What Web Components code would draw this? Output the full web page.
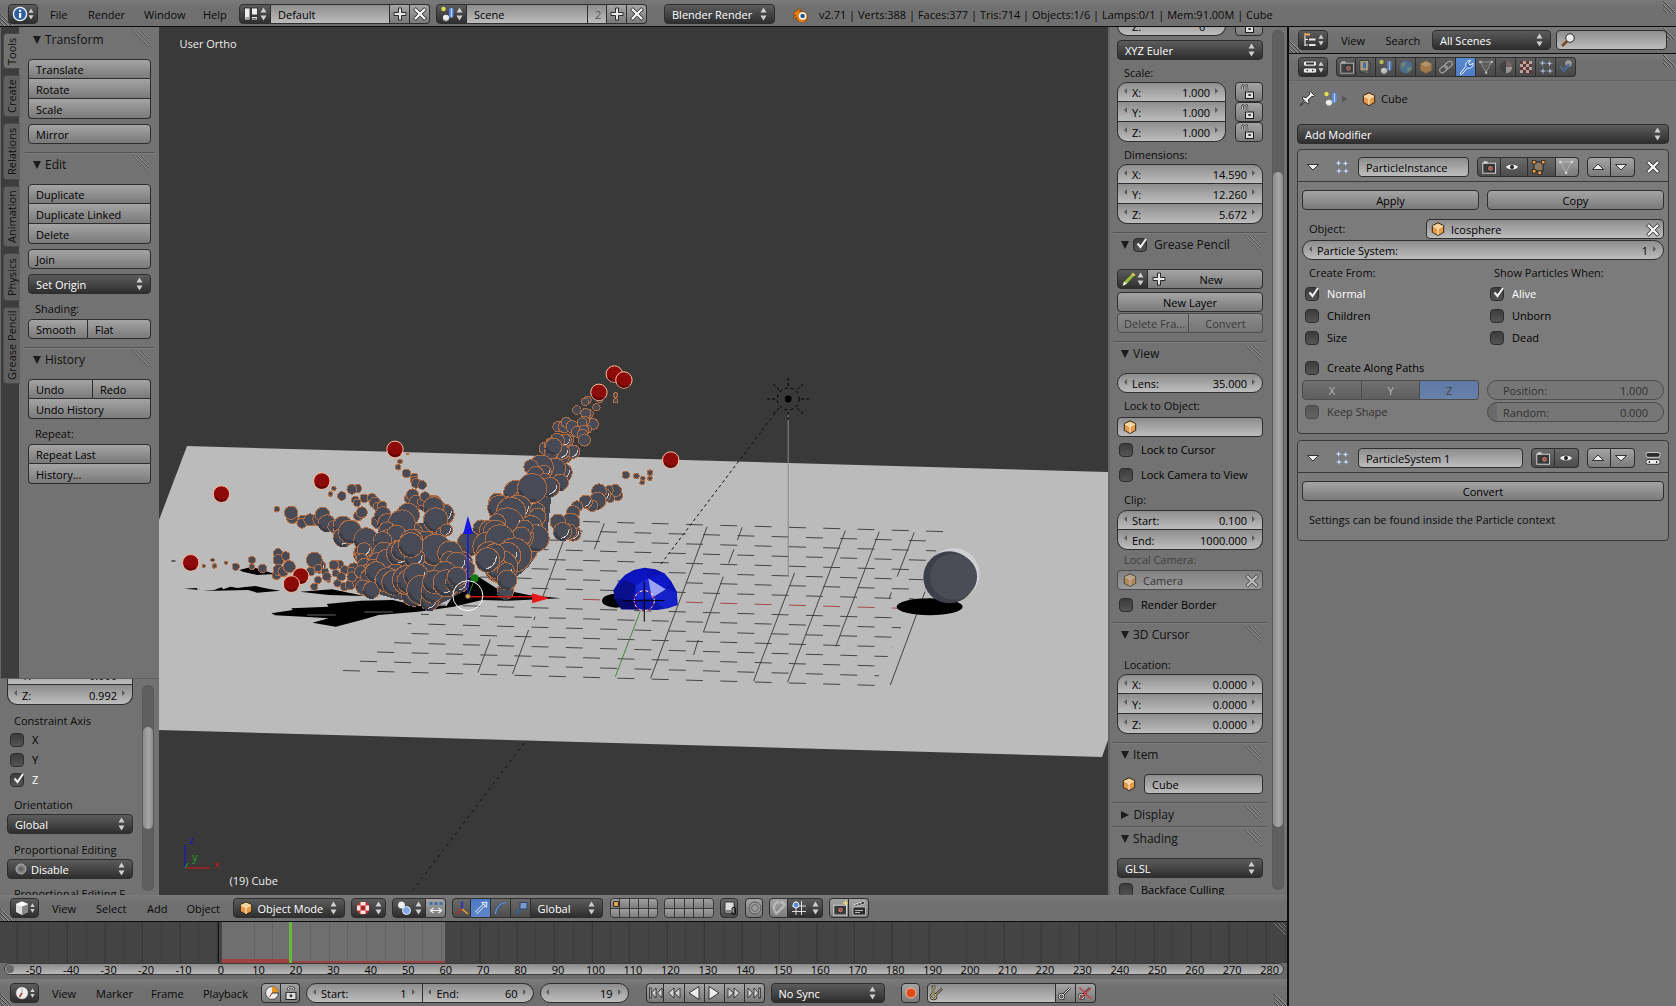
<!doctype html>
<html><head><meta charset="utf-8"><title>Blender</title>
<style>html,body{margin:0;padding:0;background:#393939;overflow:hidden}</style></head>
<body>
<b-screen>
  <b-head style="padding-top:1px">
    <b-hatch at="bl"></b-hatch><b-hatch at="tr"></b-hatch>
    <b-btn k="menu" ico style="width:30px;margin-left:8px"><b-ico slot="i" n="info"></b-ico></b-btn>
    <b-menu style="margin-left:12px;width:38px">File</b-menu><b-menu style="width:56px">Render</b-menu><b-menu style="width:59px">Window</b-menu><b-menu style="width:36px">Help</b-menu>
    <b-btn k="menu" ico j="l" style="width:32px"><b-ico slot="i" n="screen"></b-ico></b-btn><b-btn k="text" j="c" style="width:119px">Default</b-btn><b-btn j="c" ico style="width:20px"><b-ico slot="i" n="plus"></b-ico></b-btn><b-btn j="r" ico style="width:20px"><b-ico slot="i" n="x"></b-ico></b-btn>
    <b-btn k="menu" ico j="l" style="width:31px;margin-left:6px"><b-ico slot="i" n="scene"></b-ico></b-btn><b-btn k="text" j="c" style="width:121px">Scene</b-btn><b-btn k="text" j="c" center dis2 style="width:19px;color:#555">2</b-btn><b-btn j="c" ico style="width:20px"><b-ico slot="i" n="plus"></b-ico></b-btn><b-btn j="r" ico style="width:20px"><b-ico slot="i" n="x"></b-ico></b-btn>
    <b-btn k="menu" style="width:111px;margin-left:17px">Blender Render</b-btn>
    <b-ico n="logo" style="margin-left:18px"></b-ico>
    <b-menu style="margin-left:10px;white-space:nowrap">v2.71 | Verts:388 | Faces:377 | Tris:714 | Objects:1/6 | Lamps:0/1 | Mem:91.00M | Cube</b-menu>
  </b-head>
  <b-split>
    <b-left>
      <b-viewrow>
        <b-leftdock>
          <b-toolregion>
            <b-tabs>
              <b-tab on style="height:36px">Tools</b-tab><b-tab style="height:42px">Create</b-tab><b-tab style="height:57px">Relations</b-tab><b-tab style="height:61px">Animation</b-tab><b-tab style="height:48px">Physics</b-tab><b-tab style="height:77px">Grease Pencil</b-tab>
            </b-tabs>
            <b-shelf>
              <b-panel name="Transform" first>
                <b-col><b-btn j="t">Translate</b-btn><b-btn j="m">Rotate</b-btn><b-btn j="b">Scale</b-btn></b-col>
                <b-btn style="margin-top:5px">Mirror</b-btn>
              </b-panel>
              <b-panel name="Edit">
                <b-col><b-btn j="t">Duplicate</b-btn><b-btn j="m">Duplicate Linked</b-btn><b-btn j="b">Delete</b-btn></b-col>
                <b-btn style="margin-top:5px">Join</b-btn>
                <b-btn k="menu" style="margin-top:5px">Set Origin</b-btn>
                <b-label style="margin-top:8px;height:17px">Shading:</b-label>
                <b-row><b-btn j="l" style="width:60px">Smooth</b-btn><b-btn j="r" style="flex:1">Flat</b-btn></b-row>
              </b-panel>
              <b-panel name="History">
                <b-row><b-btn j="t l" style="width:65px">Undo</b-btn><b-btn j="t r" style="flex:1">Redo</b-btn></b-row>
                <b-btn j="b">Undo History</b-btn>
                <b-label style="margin-top:8px;height:17px">Repeat:</b-label>
                <b-col><b-btn j="t">Repeat Last</b-btn><b-btn j="b">History...</b-btn></b-col>
              </b-panel>
            </b-shelf>
          </b-toolregion>
          <b-opregion>
            <b-opbody>
              <b-col style="margin-top:-14px">
                <b-btn k="num" j="t">Y:<span slot="v">0.000</span></b-btn>
                <b-btn k="num" j="b">Z:<span slot="v">0.992</span></b-btn>
              </b-col>
              <b-label style="margin-top:9px;height:16px">Constraint Axis</b-label>
              <b-check style="margin-top:3px;margin-left:3px">X</b-check>
              <b-check style="margin-top:6px;margin-left:3px">Y</b-check>
              <b-check on style="margin-top:6px;margin-left:3px">Z</b-check>
              <b-label style="margin-top:11px;height:15px">Orientation</b-label>
              <b-btn k="menu" style="margin-top:1px">Global</b-btn>
              <b-label style="margin-top:9px;height:16px">Proportional Editing</b-label>
              <b-btn k="menu" style="margin-top:0;padding-left:5px" ><b-ico slot="i" n="disc" style="margin-right:2px"></b-ico>Disable</b-btn>
              <b-label style="margin-top:8px;height:16px">Proportional Editing F</b-label>
            </b-opbody>
            <b-scroll style="margin:6px 0 4px 9px" top="42" len="102"></b-scroll>
          </b-opregion>
        </b-leftdock>
        <b-view>
          <span class="t" slot="ortho">User Ortho</span>
          <span class="t" slot="name">(19) Cube</span>
        </b-view>
        <b-nregion>
          <b-nbody>
            <b-panel name="" bare n>
              <b-row style="margin-top:-12px"><b-btn k="num" j="b" style="width:109px">Z:<span slot="v">0°</span></b-btn><b-btn ico style="width:28px;margin-left:9px"><b-ico slot="i" n="lock"></b-ico></b-btn></b-row>
              <b-btn k="menu" style="margin-top:4px">XYZ Euler</b-btn>
              <b-label style="margin-top:6px;height:16px">Scale:</b-label>
              <b-row>
                <b-col style="width:109px;margin-top:0"><b-btn k="num" j="t">X:<span slot="v">1.000</span></b-btn><b-btn k="num" j="m">Y:<span slot="v">1.000</span></b-btn><b-btn k="num" j="b">Z:<span slot="v">1.000</span></b-btn></b-col>
                <b-col style="width:28px;margin-left:9px"><b-btn ico><b-ico slot="i" n="lock"></b-ico></b-btn><b-btn ico><b-ico slot="i" n="lock"></b-ico></b-btn><b-btn ico><b-ico slot="i" n="lock"></b-ico></b-btn></b-col>
              </b-row>
              <b-label style="margin-top:6px;height:16px">Dimensions:</b-label>
              <b-col><b-btn k="num" j="t">X:<span slot="v">14.590</span></b-btn><b-btn k="num" j="m">Y:<span slot="v">12.260</span></b-btn><b-btn k="num" j="b">Z:<span slot="v">5.672</span></b-btn></b-col>
            </b-panel>
            <b-panel name="Grease Pencil" n chk style="--hh:36px">
              <b-row><b-btn k="menu" ico j="l" style="width:31px"><b-ico slot="i" n="pencil"></b-ico></b-btn><b-btn j="r" style="flex:1;padding-left:3px" center><b-ico slot="i" n="plus"></b-ico>New</b-btn></b-row>
              <b-btn center style="margin-top:3px">New Layer</b-btn>
              <b-row style="margin-top:1px;opacity:.5"><b-btn j="l" style="width:72px;padding:0 0 0 6px">Delete Fra...</b-btn><b-btn j="r" center style="flex:1">Convert</b-btn></b-row>
            </b-panel>
            <b-panel name="View" n>
              <b-btn k="num">Lens:<span slot="v">35.000</span></b-btn>
              <b-label style="margin-top:6px;height:18px">Lock to Object:</b-label>
              <b-btn k="text" ico style="padding-left:4px"><b-ico slot="i" n="cube"></b-ico></b-btn>
              <b-check style="margin-top:6px;margin-left:2px">Lock to Cursor</b-check>
              <b-check style="margin-top:11px;margin-left:2px">Lock Camera to View</b-check>
              <b-label style="margin-top:11px;height:17px">Clip:</b-label>
              <b-col><b-btn k="num" j="t">Start:<span slot="v">0.100</span></b-btn><b-btn k="num" j="b">End:<span slot="v">1000.000</span></b-btn></b-col>
              <b-label style="margin-top:3px;height:17px;opacity:.5">Local Camera:</b-label>
              <b-btn k="text" style="padding-left:4px;opacity:.55;padding-right:2px"><b-ico slot="i" n="cube" style="margin-right:5px"></b-ico>Camera<b-ico slot="v" n="x"></b-ico></b-btn>
              <b-check style="margin:8px 0 2px 2px">Render Border</b-check>
            </b-panel>
            <b-panel name="3D Cursor" n>
              <b-label style="margin-top:4px;height:16px">Location:</b-label>
              <b-col><b-btn k="num" j="t">X:<span slot="v">0.0000</span></b-btn><b-btn k="num" j="m">Y:<span slot="v">0.0000</span></b-btn><b-btn k="num" j="b">Z:<span slot="v">0.0000</span></b-btn></b-col>
            </b-panel>
            <b-panel name="Item" n>
              <b-row><b-ico n="cube" style="margin:2px 7px 0 4px"></b-ico><b-btn k="text" style="flex:1">Cube</b-btn></b-row>
            </b-panel>
            <b-panel name="Display" n closed></b-panel>
            <b-panel name="Shading" n>
              <b-btn k="menu">GLSL</b-btn>
              <b-check style="margin-top:5px;margin-left:2px">Backface Culling</b-check>
            </b-panel>
          </b-nbody>
          <b-scroll style="margin:3px 0 5px 0" top="142" len="655"></b-scroll>
        </b-nregion>
      </b-viewrow>
      <b-head>
        <b-hatch at="bl"></b-hatch>
        <b-btn k="menu" ico style="width:29px;margin-left:10px"><b-ico slot="i" n="v3d"></b-ico></b-btn>
        <b-menu style="margin-left:13px;width:44px">View</b-menu><b-menu style="width:51px">Select</b-menu><b-menu style="width:39.5px">Add</b-menu><b-menu style="width:46px">Object</b-menu>
        <b-btn k="menu" ico2 style="width:112px;padding-left:4px"><b-ico slot="i" n="cube" style="margin-right:4px"></b-ico>Object Mode</b-btn>
        <b-btn k="menu" ico style="width:35px;margin-left:6px"><b-ico slot="i" n="shade"></b-ico></b-btn>
        <b-btn k="menu" ico j="l" style="width:34px;margin-left:6px"><b-ico slot="i" n="pivot"></b-ico></b-btn><b-btn j="r" ico style="width:20px"><b-ico slot="i" n="swap"></b-ico></b-btn>
        <b-btn ico k="dark" j="l" style="width:19px;margin-left:6px"><b-ico slot="i" n="axes"></b-ico></b-btn><b-btn ico k="blue" j="c" style="width:20px"><b-ico slot="i" n="arrow"></b-ico></b-btn><b-btn ico k="dark" j="c" style="width:20px"><b-ico slot="i" n="rot"></b-ico></b-btn><b-btn ico k="dark" j="c" style="width:20px"><b-ico slot="i" n="scl"></b-ico></b-btn><b-btn k="menu" j="r" style="width:72.5px">Global</b-btn>
        <b-layers dot style="width:48px;margin-left:7px"></b-layers><b-layers style="width:50px;margin-left:6px"></b-layers>
        <b-btn ico style="width:18px;margin-left:6px;--p:0" k="dark"><b-ico slot="i" n="lnk"></b-ico></b-btn>
        <b-btn ico style="width:18px;margin-left:7px;--p:0"><b-ico slot="i" n="ring"></b-ico></b-btn>
        <b-btn ico j="l" style="width:19px;margin-left:6px;--p:0"><b-ico slot="i" n="mag"></b-ico></b-btn><b-btn k="menu" ico j="r" style="width:35px"><b-ico slot="i" n="snap"></b-ico></b-btn>
        <b-btn ico j="l" style="width:20px;margin-left:6px;--p:0"><b-ico slot="i" n="rcam"></b-ico></b-btn><b-btn ico j="r" style="width:20px;--p:0"><b-ico slot="i" n="clap"></b-ico></b-btn>
      </b-head>
      <b-graph></b-graph>
      <b-ruler></b-ruler>
      <b-head noline>
        <b-hatch at="bl"></b-hatch><b-hatch at="br"></b-hatch>
        <b-btn k="menu" ico style="width:29px;margin-left:10px"><b-ico slot="i" n="clock"></b-ico></b-btn>
        <b-menu style="margin-left:13px;width:44px">View</b-menu><b-menu style="width:55px">Marker</b-menu><b-menu style="width:52px">Frame</b-menu><b-menu style="width:58px">Playback</b-menu>
        <b-btn ico j="l" style="width:20px;--p:0"><b-ico slot="i" n="prev"></b-ico></b-btn><b-btn ico j="r" style="width:19px;--p:0"><b-ico slot="i" n="lk"></b-ico></b-btn>
        <b-btn k="num" j="l" style="width:116.5px;margin-left:6px">Start:<span slot="v">1</span></b-btn><b-btn k="num" j="r" style="width:111px">End:<span slot="v">60</span></b-btn>
        <b-btn k="num" style="width:89px;margin-left:6px"><span slot="v">19</span></b-btn>
        <b-btn ico j="l" style="width:18.5px;margin-left:17px;--p:0"><b-ico slot="i" n="first"></b-ico></b-btn><b-btn ico j="c" style="width:20.5px;--p:0"><b-ico slot="i" n="pk"></b-ico></b-btn><b-btn ico j="c" style="width:20px;--p:0"><b-ico slot="i" n="rev"></b-ico></b-btn><b-btn ico j="c" style="width:20px;--p:0"><b-ico slot="i" n="play"></b-ico></b-btn><b-btn ico j="c" style="width:20px;--p:0"><b-ico slot="i" n="nk"></b-ico></b-btn><b-btn ico j="r" style="width:20px;--p:0"><b-ico slot="i" n="last"></b-ico></b-btn>
        <b-btn k="menu" style="width:114px;margin-left:6px">No Sync</b-btn>
        <b-btn ico style="width:19px;margin-left:16px;--p:0"><b-ico slot="i" n="rec"></b-ico></b-btn>
        <b-btn k="text" ico j="l" style="width:129px;margin-left:7px;padding-left:1px"><b-ico slot="i" n="key"></b-ico></b-btn><b-btn ico j="c" style="width:20px;--p:0"><b-ico slot="i" n="keyadd"></b-ico></b-btn><b-btn ico j="r" style="width:20px;--p:0"><b-ico slot="i" n="keydel"></b-ico></b-btn>
      </b-head>
    </b-left>
    <b-right>
      <b-head>
        <b-hatch at="tr"></b-hatch><b-hatch at="bl"></b-hatch>
        <b-btn k="menu" ico style="width:30px;margin-left:9px"><b-ico slot="i" n="outl"></b-ico></b-btn>
        <b-menu style="margin-left:13px;width:44.5px">View</b-menu><b-menu style="width:46.5px">Search</b-menu>
        <b-btn k="menu" style="width:119px">All Scenes</b-btn>
        <b-btn k="text" ico style="width:111px;margin-left:5px;padding-left:3px"><b-ico slot="i" n="zoom"></b-ico></b-btn>
      </b-head>
      <b-head noline style="box-shadow:0 1px #666">
        <b-hatch at="tr"></b-hatch>
        <b-btn k="menu" ico style="width:30px;margin-left:9px"><b-ico slot="i" n="prop"></b-ico></b-btn>
        <b-btn k="tab" ico j="l" style="margin-left:8px"><b-ico slot="i" n="cam"></b-ico></b-btn><b-btn k="tab" ico j="c"><b-ico slot="i" n="layers"></b-ico></b-btn><b-btn k="tab" ico j="c"><b-ico slot="i" n="scene"></b-ico></b-btn><b-btn k="tab" ico j="c"><b-ico slot="i" n="world"></b-ico></b-btn><b-btn k="tab" ico j="c"><b-ico slot="i" n="obj"></b-ico></b-btn><b-btn k="tab" ico j="c"><b-ico slot="i" n="link"></b-ico></b-btn><b-btn k="tab" on ico j="c"><b-ico slot="i" n="wrench"></b-ico></b-btn><b-btn k="tab" ico j="c"><b-ico slot="i" n="data"></b-ico></b-btn><b-btn k="tab" ico j="c"><b-ico slot="i" n="mat"></b-ico></b-btn><b-btn k="tab" ico j="c"><b-ico slot="i" n="tex"></b-ico></b-btn><b-btn k="tab" ico j="c"><b-ico slot="i" n="stars"></b-ico></b-btn><b-btn k="tab" ico j="r"><b-ico slot="i" n="phys"></b-ico></b-btn>
      </b-head>
      <b-props>
        <b-row style="height:38px;align-items:center;margin-top:0">
          <b-ico n="pin" style="margin-left:2px"></b-ico><b-ico n="scene" style="margin-left:8px"></b-ico><b-ico n="triR" style="margin-left:-2px"></b-ico><b-ico n="cube" style="margin-left:8px"></b-ico><b-label style="padding-left:4px;line-height:38px;height:38px">Cube</b-label>
        </b-row>
        <b-btn k="menu" style="margin-top:6px;">Add Modifier</b-btn>
        <b-box style="margin-top:5px">
          <b-ico slot="head" n="down" style="margin-left:7px"></b-ico><b-ico slot="head" n="stars" style="margin-left:13px"></b-ico>
          <b-btn slot="head" k="text" style="width:111px;margin-left:8px">ParticleInstance</b-btn>
          <b-btn slot="head" k="dark" ico j="l" style="width:24px;margin-left:8px"><b-ico slot="i" n="cam"></b-ico></b-btn><b-btn slot="head" k="dark" ico j="c" style="width:27px"><b-ico slot="i" n="eye"></b-ico></b-btn><b-btn slot="head" k="dark" ico j="c" style="width:28px"><b-ico slot="i" n="edit"></b-ico></b-btn><b-btn slot="head" ico j="r" style="width:23px;--p:0"><b-ico slot="i" n="data"></b-ico></b-btn>
          <b-btn slot="head" ico j="l" style="width:24px;margin-left:8px;--p:0"><b-ico slot="i" n="up"></b-ico></b-btn><b-btn slot="head" ico j="r" style="width:24px;--p:0"><b-ico slot="i" n="down"></b-ico></b-btn>
          <b-ico slot="head" n="x" style="margin-left:10px"></b-ico>
          <b-grid style="margin-top:8px"><b-btn center>Apply</b-btn><b-btn center>Copy</b-btn></b-grid>
          <b-row style="margin-top:9px"><b-label style="width:124px;line-height:19px">Object:</b-label><b-btn k="text" style="flex:1;padding-left:3px;padding-right:2px"><b-ico slot="i" n="cube" style="margin-right:5px"></b-ico>Icosphere<b-ico slot="v" n="x"></b-ico></b-btn></b-row>
          <b-btn k="num" style="margin-top:1px">Particle System:<span slot="v">1</span></b-btn>
          <b-grid style="margin-top:6px">
            <b-col><b-label style="height:14px">Create From:</b-label><b-check on style="margin:7px 0 0 3px">Normal</b-check><b-check style="margin:8px 0 0 3px">Children</b-check><b-check style="margin:8px 0 0 3px">Size</b-check></b-col>
            <b-col><b-label style="height:14px">Show Particles When:</b-label><b-check on style="margin:7px 0 0 3px">Alive</b-check><b-check style="margin:8px 0 0 3px">Unborn</b-check><b-check style="margin:8px 0 0 3px">Dead</b-check></b-col>
          </b-grid>
          <b-check style="margin:16px 0 0 3px">Create Along Paths</b-check>
          <b-grid style="margin-top:5px;opacity:.6">
            <b-col>
              <b-row><b-btn k="dark" center j="l" style="flex:1">X</b-btn><b-btn k="dark" center j="c" style="flex:1">Y</b-btn><b-btn k="blue" center j="r" style="flex:1">Z</b-btn></b-row>
              <b-check style="margin:5px 0 0 3px">Keep Shape</b-check>
            </b-col>
            <b-col>
              <b-btn k="plain">Position:<span slot="v">1.000</span></b-btn>
              <b-btn k="plain" style="margin-top:2px;background:linear-gradient(90deg,#5f5f5f 9px,#737373 9px)">Random:<span slot="v">0.000</span></b-btn>
            </b-col>
          </b-grid>
        </b-box>
        <b-box style="margin-top:6px">
          <b-ico slot="head" n="down" style="margin-left:7px"></b-ico><b-ico slot="head" n="stars" style="margin-left:13px"></b-ico>
          <b-btn slot="head" k="text" style="width:165px;margin-left:8px">ParticleSystem 1</b-btn>
          <b-btn slot="head" k="dark" ico j="l" style="width:24px;margin-left:8px"><b-ico slot="i" n="cam"></b-ico></b-btn><b-btn slot="head" k="dark" ico j="r" style="width:24px"><b-ico slot="i" n="eye"></b-ico></b-btn>
          <b-btn slot="head" ico j="l" style="width:24px;margin-left:8px;--p:0"><b-ico slot="i" n="up"></b-ico></b-btn><b-btn slot="head" ico j="r" style="width:24px;--p:0"><b-ico slot="i" n="down"></b-ico></b-btn>
          <b-ico slot="head" n="tog" style="margin-left:10px"></b-ico>
          <b-btn center style="margin-top:8px">Convert</b-btn>
          <b-label style="margin-top:12px;height:16px">Settings can be found inside the Particle context</b-label>
        </b-box>
      </b-props>
    </b-right>
  </b-split>
</b-screen>
<script>
const star=(x,y,r)=>`M${x} ${y-r}L${x+.7} ${y-.7}L${x+r} ${y}L${x+.7} ${y+.7}L${x} ${y+r}L${x-.7} ${y+.7}L${x-r} ${y}L${x-.7} ${y-.7}Z`;
const I={
info:`<circle cx="8" cy="8" r="6.6" fill="#2f5f9f" stroke="#e8eef8" stroke-width="1.4"/><rect x="7" y="7" width="2.2" height="5" fill="#fff"/><rect x="7" y="3.8" width="2.2" height="2" fill="#fff"/>`,
screen:`<rect x="1.5" y="2" width="5.5" height="12" fill="#eee" stroke="#222" stroke-width=".8"/><rect x="8.5" y="2" width="6" height="7" fill="#eee" stroke="#222" stroke-width=".8"/><rect x="8.5" y="10.5" width="6" height="3.5" fill="#eee" stroke="#222" stroke-width=".8"/><path d="M2.5 12h3.5M9.5 12.5h4" stroke="#555"/>`,
scene:`<circle cx="3.5" cy="3" r="2.2" fill="#dede50"/><rect x="9" y="2" width="4.6" height="9.5" rx="1.6" fill="#5c8ce0"/><path d="M11.5 2.3v9" stroke="#bcd4ff"/><circle cx="6" cy="12" r="3.2" fill="#e6e6e6"/><circle cx="5.2" cy="11.2" r="1" fill="#fff"/><path d="M3 13a3.2 3.2 0 0 0 6 0" stroke="#777" fill="none"/>`,
plus:`<path d="M6.5 2h3v4.5H14v3H9.5V14h-3V9.5H2v-3h4.5z" fill="#e8e8e8" stroke="#1a1a1a" stroke-width=".9"/>`,
x:`<path d="M3.8 1.6 8 5.8l4.2-4.2 2.2 2.2L10.2 8l4.2 4.2-2.2 2.2L8 10.2l-4.2 4.2-2.2-2.2L5.8 8 1.6 3.8z" fill="#eee" stroke="#1a1a1a" stroke-width=".9"/>`,
logo:`<path d="M.5 7 7 2.2l1.2 1.6L6 5.4h3.6a5.6 5.6 0 1 1-6.2 5.8L1 13l-.6-1.6 2.6-2.2H.8z" fill="#e87d0d" stroke="#5a2c00" stroke-width=".5"/><circle cx="9.6" cy="10" r="3.8" fill="#fff"/><circle cx="9.6" cy="10" r="2.3" fill="#265787"/>`,
cube:`<path d="M8 1.3 14.2 4.6v7L8 14.9l-6.2-3.3v-7z" fill="#2e2412"/><path d="M8 2.4 13.2 5v6.2L8 13.9l-5.2-2.7V5z" fill="#e59b4a"/><path d="M2.8 5 8 2.4 13.2 5 8 7.8z" fill="#f6d39e"/><path d="M8 7.8v6.1" stroke="#fff2d8"/><path d="M2.8 5 8 7.8 13.2 5" stroke="#fff2d8" fill="none" stroke-width=".7"/>`,
lock:`<rect x="6.5" y="8" width="8" height="6.5" fill="#ddd" stroke="#1c1c1c"/><rect x="9.4" y="10" width="2.4" height="2" fill="#333"/><path d="M8 8V2.8a2 2 0 0 0-4.4 0V5" fill="none" stroke="#1c1c1c" stroke-width="2.2"/><path d="M8 8V2.8a2 2 0 0 0-4.4 0V5" fill="none" stroke="#ddd" stroke-width="1"/>`,
pencil:`<path d="M1.5 15 3 10.5 11.5 1.5 14.5 4 6 12.8z" fill="#9cc04a" stroke="#26350a" stroke-width=".8"/><path d="M10.3 2.8l3 2.4 1.3-1.3-3-2.4z" fill="#e9c06a"/><path d="M1.5 15 3 10.5l3 2.3z" fill="#eee"/>`,
outl:`<path d="M2 1.5h6v2H2z" fill="#f2b060"/><path d="M3 4v10M3 7.5h3M3 13h3" stroke="#e8e8e8" stroke-width="1.2" fill="none"/><rect x="7" y="6.5" width="6.5" height="2" fill="#e8e8e8"/><rect x="7" y="12" width="6.5" height="2" fill="#e8e8e8"/>`,
prop:`<rect x="1.5" y="2" width="13" height="5.2" rx="1.6" fill="#e8e8e8" stroke="#222" stroke-width=".7"/><rect x="1.5" y="9" width="13" height="5" rx="1.6" fill="#e8e8e8" stroke="#222" stroke-width=".7"/><path d="M4 4.5h8" stroke="#333" stroke-width="2"/><path d="M4 11.5l2-1v2zM12 11.5l-2-1v2z" fill="#222"/>`,
cam:`<rect x="1.8" y="4.2" width="12.8" height="10" fill="#3a3a3a" stroke="#ddd" stroke-width=".9"/><rect x="2.5" y="2.4" width="4" height="2" fill="#ddd"/><circle cx="9.5" cy="9.3" r="3.1" fill="#9a8078" stroke="#222"/><circle cx="9.8" cy="9.2" r="1.3" fill="#d03a3a"/>`,
layers:`<rect x="3" y="3.5" width="9" height="10.5" fill="#8a8a8a" stroke="#333" transform="rotate(8 8 8)"/><rect x="1.8" y="1.5" width="9" height="10.5" fill="#c9b98f" stroke="#333"/><rect x="5" y="3.2" width="3" height="6" fill="#4a77c4"/>`,
world:`<circle cx="8" cy="8" r="6.5" fill="#4b79a6"/><path d="M3 5l3-2 2 2-2 2-1 3zM9 9l4-1 0 3-3 2z" fill="#7f9a7a"/>`,
obj:`<path d="M8 1.3 14.2 4.6v7L8 14.9l-6.2-3.3v-7z" fill="#8a6a3c"/><path d="M8 2.4 13.2 5v6.2L8 13.9l-5.2-2.7V5z" fill="#c28a4e"/><path d="M2.8 5 8 2.4 13.2 5 8 7.8z" fill="#d8b078"/>`,
link:`<g fill="none" stroke="#b8b8b8" stroke-width="1.3" transform="rotate(-40 8 8)"><rect x=".5" y="5.5" width="8.5" height="5" rx="2.5"/><rect x="7" y="5.5" width="8.5" height="5" rx="2.5"/></g>`,
wrench:`<path d="M2 14.5 8 7.3C7 4.5 9 1.5 12.5 1.5l-2 2.8 1.5 1.8 3-1.8c.4 3.4-2.6 5.6-5.6 4.6L3.6 15.5z" fill="#3c70c8" stroke="#fff" stroke-width="1"/>`,
data:`<path d="M2.5 3h11L8 13.5z" fill="none" stroke="#b8b8b8" stroke-width=".9"/><path d="M2.5 3 8 7.5 13.5 3M8 7.5v6" stroke="#999" fill="none" stroke-width=".6"/><g fill="#ddd"><rect x="1.2" y="1.8" width="2.2" height="2.2"/><rect x="12.6" y="1.8" width="2.2" height="2.2"/><rect x="7" y="12.6" width="2.2" height="2.2"/></g>`,
mat:`<circle cx="8" cy="8" r="6.2" fill="#7c6a64"/><path d="M8 1.8a6.2 6.2 0 0 0-6.2 6.2A6.2 6.2 0 0 0 8 14.2z" fill="#3c3c3c"/><path d="M8 8h6.2A6.2 6.2 0 0 1 8 14.2z" fill="#b8b0ac"/>`,
tex:`<rect x="2" y="2" width="12" height="12" fill="#d8c8c0"/><g fill="#6a2a2a"><rect x="2" y="2" width="3" height="3"/><rect x="8" y="2" width="3" height="3"/><rect x="5" y="5" width="3" height="3"/><rect x="11" y="5" width="3" height="3"/><rect x="2" y="8" width="3" height="3"/><rect x="8" y="8" width="3" height="3"/><rect x="5" y="11" width="3" height="3"/><rect x="11" y="11" width="3" height="3"/></g>`,
stars:`<path d="${star(4.5,4,3.6)}${star(11.5,4.5,3.3)}${star(5,12,3.6)}${star(12,12,3.3)}" fill="#f2f5ff" stroke="#5d78b0" stroke-width=".35"/>`,
phys:`<circle cx="10.5" cy="4.5" r="3.2" fill="#b8b8b8"/><path d="M2 7l4 5 5-7" fill="none" stroke="#4a6ea8" stroke-width="2.4"/>`,
pin:`<path d="M1 15 5.5 9.4 3 7l1.2-1.2 2.8 1L10.8 3l-.6-1.3L11.5.6l4 3.9-1.2 1.2-1.3-.5L9.2 9l1 3-1.2 1.2-2.5-2.7z" fill="#f2f2f2" stroke="#1c1c1c" stroke-width=".9"/>`,
zoom:`<circle cx="10" cy="6" r="4.3" fill="#c9c9c9" stroke="#333" stroke-width="1"/><circle cx="10" cy="6" r="3.2" fill="#e9e9e9"/><path d="M7 9.2 2 14" stroke="#7a4a20" stroke-width="2.6"/>`,
triR:`<path d="M5 4.5 10 8 5 11.5z" fill="#555"/>`,
down:`<path d="M2.5 5.5h11L8 11z" fill="#eee" stroke="#222" stroke-width=".9"/>`,
up:`<path d="M2.5 10.5h11L8 5z" fill="#eee" stroke="#222" stroke-width=".9"/>`,
eye:`<path d="M1.5 8C4 4.2 12 4.2 14.5 8 12 11.8 4 11.8 1.5 8z" fill="#f0f0f0" stroke="#333" stroke-width=".6"/><circle cx="8" cy="8" r="2" fill="#222"/>`,
edit:`<path d="M3 3h9v9H3z" fill="#8a7a66" stroke="#222"/><g fill="#f0a040" stroke="#222" stroke-width=".7"><rect x="1.5" y="1.5" width="3.4" height="3.4"/><rect x="10.6" y="1.5" width="3.4" height="3.4"/><rect x="1.5" y="10.6" width="3.4" height="3.4"/><rect x="7" y="12" width="3.4" height="3.4"/></g>`,
tog:`<rect x="1" y="2.5" width="14" height="4.8" rx="2" fill="#2d2d2d" stroke="#eee" stroke-width=".8"/><rect x="1" y="9.5" width="14" height="4.8" rx="2" fill="#eee" stroke="#222" stroke-width=".8"/><path d="M3 12l2-1.3v2.6zM13 12l-2-1.3v2.6z" fill="#222"/>`,
v3d:`<path d="M8 1.5 14 4v8l-6 3-6-3V4z" fill="#ddd"/><path d="M8 6.5V15l6-3V4z" fill="#888"/><path d="M2 4l6 2.5L14 4 8 1.5z" fill="#fff"/>`,
clock:`<circle cx="8" cy="8" r="6.4" fill="#eee" stroke="#333" stroke-width=".8"/><path d="M8 8 5.5 12" stroke="#b03030" stroke-width="1.5"/><path d="M8 8V3" stroke="#aaa"/>`,
shade:`<circle cx="8" cy="8" r="6.6" fill="#c63030"/><g fill="#f0e4e4"><rect x="2" y="5.5" width="3.5" height="5"/><rect x="10.5" y="5.5" width="3.5" height="5"/><rect x="5.5" y="2" width="5" height="3.5"/><rect x="5.5" y="10.5" width="5" height="3.5"/></g><circle cx="8" cy="8" r="2" fill="#a02828"/>`,
pivot:`<circle cx="5.5" cy="5" r="4" fill="#eee" stroke="#222" stroke-width=".7"/><circle cx="10.5" cy="10.5" r="4" fill="#7ea8e8" stroke="#eee" stroke-width="1"/>`,
swap:`<g fill="#3f6fae"><rect x="1.5" y="2" width="3" height="3"/><rect x="6.5" y="2" width="3" height="3"/><rect x="11.5" y="2" width="3" height="3"/></g><path d="M3 10.5h10M5.5 8 2.5 10.5 5.5 13M10.5 8l3 2.5-3 2.5" stroke="#eee" stroke-width="1.2" fill="none"/>`,
axes:`<path d="M8 9V1.5" stroke="#2828d0" stroke-width="1.6"/><path d="M8 9 2 14" stroke="#c82828" stroke-width="1.6"/><path d="M8 9l6 5" stroke="#e8a030" stroke-width="1.6"/>`,
arrow:`<path d="M3 13 12 4" stroke="#fff" stroke-width="3"/><path d="M3 13 12 4" stroke="#4a77c0" stroke-width="1.6"/><path d="M8.5 2.5 14 2l-.5 5.5z" fill="#7ba4e0" stroke="#fff" stroke-width=".8"/>`,
rot:`<path d="M2.5 14C3 8 6 3.5 13 2.5" fill="none" stroke="#3a5e92" stroke-width="2.6"/><path d="M2.5 14C3 8 6 3.5 13 2.5" fill="none" stroke="#7a9ac8" stroke-width="1"/>`,
scl:`<path d="M3 14 8 8" stroke="#3a5e92" stroke-width="2.6"/><rect x="7" y="2.5" width="7" height="6.5" fill="#7a9ac8" stroke="#2b4468"/>`,
lnk:`<rect x="3" y="2" width="9" height="11" fill="#ddd" stroke="#222" stroke-width=".8"/><path d="M4 11h5" stroke="#222"/><rect x="10" y="7.5" width="3.5" height="7" rx="1.6" fill="none" stroke="#111" stroke-width="1.1"/>`,
ring:`<circle cx="8" cy="8" r="6" fill="#9a9a9a" stroke="#5a5a5a"/><circle cx="8" cy="8" r="3.4" fill="none" stroke="#666"/>`,
mag:`<path d="M3 10V7a5 5 0 0 1 5-5M6 13 12.5 6.5a2.3 2.3 0 0 0-3.3-3.3" fill="none" stroke="#b8b8b8" stroke-width="2.4"/><path d="M3.5 10.5c.6 2 1.5 3 3 3.5" stroke="#b8b8b8" stroke-width="2.4" fill="none"/>`,
snap:`<path d="M5 1v14M10.5 1v14M1 6h14M1 11.5h14" stroke="#eee" stroke-width=".9"/><circle cx="5" cy="5" r="3" fill="#5c8ce0" stroke="#eee"/>`,
rcam:`<rect x="1.8" y="5.2" width="12.8" height="9.8" fill="#3a3a3a" stroke="#ddd" stroke-width=".9"/><circle cx="8.5" cy="10" r="3" fill="#9a8078" stroke="#222"/><circle cx="8.8" cy="10" r="1.2" fill="#d03a3a"/><path d="M13.5 .5v5M11 3h5" stroke="#ffe070" stroke-width="1.2"/>`,
clap:`<rect x="2" y="7" width="12.5" height="8" fill="#2a2a2a" stroke="#ddd" stroke-width=".7"/><path d="M1.5 5.5 13 1.2l.8 2.6-11.4 3z" fill="#2a2a2a" stroke="#ddd" stroke-width=".7"/><path d="M4 5.8 3 3.8M7 4.8 6 3M10 3.8 9 2" stroke="#eee" stroke-width="1"/><path d="M4 10.5h8M4 12.5h5" stroke="#bbb"/>`,
prev:`<circle cx="8" cy="8" r="6.4" fill="#eee" stroke="#333" stroke-width=".8"/><path d="M8 8V1.6a6.4 6.4 0 0 1 6.4 6.4z" fill="#e8901c"/><path d="M8 8 5.5 12" stroke="#b03030"/><path d="M8 8h6.4" stroke="#333"/>`,
lk:`<rect x="3" y="7.5" width="10" height="7" fill="#ddd" stroke="#222"/><rect x="6.8" y="9.5" width="2.4" height="2.6" fill="#333"/><path d="M5 7.5V5a3 3 0 0 1 6 0v2.5" fill="none" stroke="#222" stroke-width="2.1"/><path d="M5 7.5V5a3 3 0 0 1 6 0v2.5" fill="none" stroke="#ddd" stroke-width="1"/>`,
first:`<g fill="#d5d5d5" stroke="#222" stroke-width=".8"><path d="M8 3v10L3.5 8zM14 3v10L9.5 8z"/><rect x="1.5" y="3" width="1.6" height="10"/></g>`,
pk:`<g fill="#d5d5d5" stroke="#222" stroke-width=".8"><path d="M8 3v10L2.5 8zM14 3v10L8.5 8z"/></g>`,
rev:`<path d="M13 1.5v13L3 8z" fill="#ececec" stroke="#222" stroke-width=".9"/>`,
play:`<path d="M3 1.5v13L13 8z" fill="#ececec" stroke="#222" stroke-width=".9"/>`,
nk:`<g fill="#d5d5d5" stroke="#222" stroke-width=".8"><path d="M2 3v10l5.5-5zM8 3v10l5.5-5z"/></g>`,
last:`<g fill="#d5d5d5" stroke="#222" stroke-width=".8"><path d="M2 3v10l4.5-5zM8 3v10l4.5-5z"/><rect x="12.9" y="3" width="1.6" height="10"/></g>`,
rec:`<circle cx="8" cy="8" r="5" fill="#e04a18" stroke="#ffbe9a" stroke-width="1"/>`,
key:`<g fill="none" stroke="#222" stroke-width="2.4"><circle cx="4.5" cy="11.5" r="2.6"/><path d="M6.5 10 13 3.5M4 9V2h3"/></g><g fill="none" stroke="#ecd98a" stroke-width="1"><circle cx="4.5" cy="11.5" r="2.6"/><path d="M6.5 10 13 3.5M4 9V2h3"/></g>`,
keyadd:`<g fill="none" stroke="#222" stroke-width="2.2"><circle cx="4.5" cy="11.5" r="2.4"/><path d="M6.5 9.5 13 3"/></g><g fill="none" stroke="#eee" stroke-width="1"><circle cx="4.5" cy="11.5" r="2.4"/><path d="M6.5 9.5 13 3"/></g>`,
keydel:`<g fill="none" stroke="#222" stroke-width="2.2"><circle cx="4.5" cy="11.5" r="2.4"/><path d="M6.5 9.5 13 3"/></g><g fill="none" stroke="#eee" stroke-width="1"><circle cx="4.5" cy="11.5" r="2.4"/><path d="M6.5 9.5 13 3"/></g><path d="M2.5 2.5 14 14M13.5 3 3 14" stroke="#c83c3c" stroke-width="1.4"/>`,
disc:`<circle cx="8" cy="8" r="5" fill="#888" stroke="#aaa"/><circle cx="8" cy="8" r="2.6" fill="#666"/>`
};
function def(name,css,html,setup){
  customElements.define(name,class extends HTMLElement{
    constructor(){super();this.attachShadow({mode:'open'}).innerHTML=`<style>${css}</style>${html}`;}
    connectedCallback(){if(setup)setup(this,this.shadowRoot);}
  });
}
const FF='"Open Sans","Noto Sans",sans-serif';
def('b-screen',`:host{display:flex;flex-direction:column;width:1676px;height:1006px;overflow:hidden;background:#393939;font:11px/14px ${FF};color:#000;position:relative}`,'<slot></slot>');
def('b-head',`:host{display:flex;align-items:center;flex:none;box-sizing:border-box;height:27px;position:relative;background:linear-gradient(#7a7a7a,#707070 30%,#6f6f6f);border-bottom:1px solid #0c0c0c}
:host([noline]){height:26px;border-bottom:0}`,'<slot></slot>');
def('b-hatch',`:host{position:absolute;width:13px;height:13px;display:block;pointer-events:none}
:host([at=bl]){left:0;bottom:0}:host([at=br]){right:0;bottom:0}:host([at=tr]){right:0;top:0}
svg{display:block}`,`<svg width="13" height="13" viewBox="0 0 13 13"><path d="M0 1 12 13M0 5l8 8M0 9l4 4" stroke="#3e3e3e" fill="none"/><path d="M1 1l12 12M1 5l8 8M1 9l4 4" stroke="#9a9a9a" fill="none"/></svg>`);
def('b-menu',`:host{display:block;flex:none;color:#0a0a0a;font-size:11px;line-height:20px;white-space:nowrap;position:relative;top:1px}`,'<slot></slot>');
def('b-split',`:host{display:flex;flex:1;min-height:0}`,'<slot></slot>');
def('b-left',`:host{display:flex;flex-direction:column;width:1288px;flex:none;box-sizing:border-box;border-right:1px solid #0c0c0c}`,'<slot></slot>');
def('b-right',`:host{display:flex;flex-direction:column;flex:1;min-width:0;background:#737373;border-left:1px solid #0c0c0c}`,'<slot></slot>');
def('b-viewrow',`:host{display:flex;height:868px;flex:none}`,'<slot></slot>');
def('b-leftdock',`:host{display:flex;flex-direction:column;width:159px;flex:none;background:#727272}`,'<slot></slot>');
def('b-toolregion',`:host{display:flex;height:651px;flex:none;overflow:hidden}`,'<slot></slot>');
def('b-tabs',`:host{display:flex;flex-direction:column;gap:6px;width:19px;flex:none;box-sizing:border-box;padding:6px 0 0 3px;background:#3d3d3d;box-shadow:inset 1px 0 #666}`,'<slot></slot>');
def('b-tab',`:host{display:block;width:17px;box-sizing:border-box;background:#606060;writing-mode:vertical-rl;transform:rotate(180deg);text-align:center;font-size:11px;line-height:16px;color:#111;white-space:nowrap;flex:none;border:1px solid #4a4a4a;border-left:0;border-radius:0 4px 4px 0}
:host([on]){background:#727272;width:17px}`,'<slot></slot>');
def('b-shelf',`:host{display:block;flex:1;min-width:0;padding:0 5px 0 6px;box-shadow:1px 0 #5a5a5a}`,'<slot></slot>');
def('b-opregion',`:host{display:flex;flex:1;min-height:0;overflow:hidden;padding-left:7px;box-sizing:border-box;border-top:1px solid #5f5f5f}`,'<slot></slot>');
def('b-opbody',`:host{display:block;width:126px;flex:none}`,'<slot></slot>');
def('b-nregion',`:host{display:flex;width:179px;flex:none;overflow:hidden;background:#727272;box-sizing:border-box;padding-left:5px;box-shadow:inset 2px 0 #666}`,'<slot></slot>');
def('b-nbody',`:host{display:block;width:153px;flex:none;margin-right:6px}`,'<slot></slot>');
def('b-scroll',`:host{display:block;width:12px;flex:none;background:#5f5f5f;border-radius:6px;position:relative;box-shadow:inset 0 0 0 1px #5a5a5a}
i{position:absolute;left:1px;right:1px;display:block;border-radius:5px;background:linear-gradient(90deg,#8d8d8d,#a6a6a6 60%,#8a8a8a)}`,'<i></i>',(h,s)=>{const i=s.querySelector('i');i.style.top=h.getAttribute('top')+'px';i.style.height=h.getAttribute('len')+'px';});
def('b-col',`:host{display:flex;flex-direction:column}`,'<slot></slot>');
def('b-row',`:host{display:flex}`,'<slot></slot>');
def('b-grid',`:host{display:grid;grid-template-columns:1fr 1fr;column-gap:8px}`,'<slot></slot>');
def('b-label',`:host{display:block;box-sizing:border-box;padding-left:7px;font-size:11px;line-height:14px;color:#0c0c0c;white-space:nowrap;flex:none}`,'<slot></slot>');
def('b-props',`:host{display:block;padding:0 7px 0 8px}`,'<slot></slot>');
def('b-ico',`:host{display:block;width:16px;height:16px;flex:none}svg{display:block}`,`<svg width="16" height="16" viewBox="0 0 16 16"></svg>`,(h,s)=>{s.querySelector('svg').innerHTML=I[h.getAttribute('n')]||'';});
def('b-btn',`:host{display:flex;flex:none;box-sizing:border-box;height:20px;border:1px solid #2e2e2e;border-radius:4px;align-items:center;position:relative;color:#000;background:linear-gradient(#a4a4a4,#7a7a7a);padding:0 7px;white-space:nowrap;overflow:hidden;min-width:0;font-size:11px;line-height:14px}
:host([k=menu]){background:linear-gradient(#5c5c5c,#2e2e2e);color:#fff}
:host([k=text]){background:linear-gradient(#8d8d8d,#bdbdbd)}
:host([k=num]),:host([k=plain]){background:linear-gradient(#8d8d8d,#bdbdbd);border-radius:10px;padding:0 15px 0 14px}
:host([k=plain]){background:#737373;border-radius:10px;padding:0 15px 0 15px}
:host([k=dark]){background:linear-gradient(#6a6a6a,#4c4c4c);color:#ddd}
:host([k=blue]){background:linear-gradient(#4d79c4,#5f86c8);color:#222}
:host([k=tab]){width:20px;background:linear-gradient(#5c5c5c,#484848);border-color:#2e2e2e}
:host([k=tab]) ::slotted(b-ico){opacity:.72}
:host([k=tab][on]) ::slotted(b-ico){opacity:1}
:host([k=tab][on]){background:linear-gradient(#5a8ad2,#4f7cc4)}
:host([ico]){padding:0 3px;justify-content:flex-start}
:host([ico]) .lab{display:none}
:host(:not([k=menu])[ico]){justify-content:center;padding:0 calc(var(--p,1) * 1px)}
:host(:not([k=menu])[ico]) ::slotted(b-ico){margin-left:1.5px}
:host([k=text][ico]){justify-content:flex-start}
:host([k=text][ico]) ::slotted(b-ico){margin-left:0}
:host([center]) .lab{flex:1;text-align:center}
:host([j~=t]){border-bottom-left-radius:0;border-bottom-right-radius:0}
:host([j~=b]){border-top-left-radius:0;border-top-right-radius:0;border-top:0}
:host([j~=m]){border-radius:0;border-top:0}
:host([j~=l]){border-top-right-radius:0;border-bottom-right-radius:0}
:host([j~=r]){border-top-left-radius:0;border-bottom-left-radius:0;border-left:0}
:host([j~=c]){border-radius:0;border-left:0}
.lab,.val{position:relative;top:1px}
.val{margin-left:auto;display:flex;align-items:center}
.ud,.a{display:none}
:host([k=menu]) .ud{display:block;margin-left:auto}
:host([k=num]) .a{display:block;position:absolute;top:5px;width:0;height:0;border:3.5px solid transparent}
.l{left:2.5px;border-right-color:#5c5c5c!important}.r{right:4px;border-left-color:#5c5c5c!important}
span{white-space:nowrap}`,
`<i class="a l"></i><slot name="i"></slot><span class="lab"><slot></slot></span><span class="val"><slot name="v"></slot></span><svg class="ud" width="7" height="14" viewBox="0 0 7 14"><path d="M3.5 .5 6.5 5.5h-6zM3.5 13.5.5 8.5h6z" fill="#cfcfcf"/></svg><i class="a r"></i>`);
def('b-check',`:host{display:flex;align-items:center;height:14px;flex:none;color:#000;font-size:11px;white-space:nowrap}
b{display:block;position:relative;width:14px;height:14px;box-sizing:border-box;border:1px solid #2c2c2c;border-radius:4px;background:linear-gradient(#3c3c3c,#545454);margin-right:8px;flex:none}
:host([on]){color:#fff}
svg{display:none;position:absolute;left:1px;top:-2px}:host([on]) svg{display:block}`,
`<b><svg width="13" height="13" viewBox="0 0 13 13"><path d="M2.5 6.5 5.5 10 11 2" fill="none" stroke="#f2f2f2" stroke-width="2"/></svg></b><slot></slot>`);
def('b-box',`:host{display:block;border:1px solid #3a3a3a;border-radius:4px;background:#7b7b7b;box-sizing:border-box;padding-bottom:11px}
.h{display:flex;align-items:center;height:32px;padding-top:2px;border-bottom:1px solid #3a3a3a;box-sizing:border-box}
.c{padding:0 4px}`,`<div class="h"><slot name="head"></slot></div><div class="c"><slot></slot></div>`);
def('b-panel',`:host{display:block;border-top:1px solid #535353;box-shadow:inset 0 1px #7f7f7f;box-sizing:border-box;position:relative;padding:0 3px 8px 3px;--hh:31px}
:host([n]){padding-left:4px}
:host([first]),:host([bare]){border-top-color:transparent;box-shadow:none}
.h{display:flex;align-items:flex-start;height:var(--hh);margin-left:-4px;padding-left:8px;font-size:12px;line-height:24px;color:#111;white-space:nowrap;box-sizing:border-box}
:host([n]) .h{margin-left:-4px}:host(:not([n])) .h{margin-left:-3px}
.t{width:0;height:0;border:4.4px solid transparent;border-top:8px solid #1c1c1c;border-bottom:0;margin:8px 4px 0 0;flex:none}
:host([closed]) .t{border:4.4px solid transparent;border-left:8px solid #1c1c1c;border-right:0;margin:8px 4.4px 0 0}
.c{display:none;width:14px;height:14px;box-sizing:border-box;border:1px solid #2c2c2c;border-radius:4px;background:linear-gradient(#3c3c3c,#545454);margin:5px 7px 0 0;flex:none;position:relative;margin-left:-4px}
:host([chk]) .c{display:block;}
:host([chk]) .t{margin-right:8px}
.c svg{position:absolute;left:1px;top:-2px}
.g{position:absolute;right:4px;top:2px}
:host([bare]) .h{display:none}
:host([closed]){padding-bottom:0}`,
`<div class="h"><i class="t"></i><i class="c"><svg width="13" height="13" viewBox="0 0 13 13"><path d="M2.5 6.5 5.5 10 11 2" fill="none" stroke="#f2f2f2" stroke-width="2"/></svg></i><span id="n"></span></div><svg class="g" width="18" height="18" viewBox="0 0 18 18"><path d="M1 1l16 16M5 1l12 12M9 1l8 8" stroke="#565656"/><path d="M2 1l15 15M6 1l11 11M10 1l7 7" stroke="#8c8c8c"/></svg><slot></slot>`,
(h,s)=>{s.getElementById('n').textContent=h.getAttribute('name');if(h.hasAttribute('bare'))s.querySelector('.g').style.display='none';if(h.hasAttribute('closed'))s.querySelector('.h').style.height='23px';});
def('b-layers',`:host{display:grid;grid-template-columns:repeat(5,1fr);grid-template-rows:1fr 1fr;height:20px;flex:none;box-sizing:border-box;border:1px solid #3a3a3a;border-radius:4px;overflow:hidden;position:relative;background:#3a3a3a;gap:1px}
i{background:linear-gradient(#a0a0a0,#7e7e7e);display:block}
b{position:absolute;left:2px;top:2px;width:4px;height:4px;background:#e8a04a;border:1px solid #2a2a2a;border-radius:1px}`,
`<i></i><i></i><i></i><i></i><i></i><i></i><i></i><i></i><i></i><i></i>`,(h,s)=>{if(h.hasAttribute('dot')&&!s.querySelector('b')){s.appendChild(document.createElement('b'));}});
def('b-graph',`:host{display:block;height:41px;flex:none;position:relative;background:#444;overflow:hidden;
background-image:repeating-linear-gradient(90deg,transparent 0,transparent 36.46px,#363636 36.46px,#363636 37.46px),repeating-linear-gradient(90deg,transparent 0,transparent 17.73px,#3d3d3d 17.73px,#3d3d3d 18.73px);background-position:30.7px 0,12px 0}
.r{position:absolute;left:222px;width:223px;top:0;bottom:0;background:#6f6f6f;background-image:repeating-linear-gradient(90deg,transparent 0,transparent 17.73px,#626262 17.73px,#626262 18.73px);background-position:14px 0}
.z{position:absolute;left:218px;width:1px;top:0;bottom:0;background:#111}
.f{position:absolute;left:289px;width:3px;top:0;bottom:0;background:#68b83c;z-index:2}
.p{position:absolute;left:222px;width:68px;height:4px;bottom:0;background:#a04242}
.q{position:absolute;left:290px;width:155px;height:2px;bottom:0;background:#a04242}
`,`<div class="r"></div><div class="z"></div><div class="p"></div><div class="q"></div><div class="f"></div><svg style="position:absolute;right:0;top:0" width="13" height="13" viewBox="0 0 13 13"><path d="M0 1 12 13M4 1l8 8M8 1l4 4" stroke="#777"/></svg>`);
def('b-ruler',`:host{display:block;height:17px;flex:none;background:#6c6c6c;box-sizing:border-box;padding:0 3px 0 4px;box-shadow:inset 0 -1px #7c7c7c}
.b{display:flex;height:12px;box-sizing:border-box;border:1px solid #3c3c3c;border-radius:6px;background:linear-gradient(#8a8a8a,#bababa);position:relative;padding-left:10px}
.b b{position:absolute;left:1px;top:1px;width:8px;height:8px;border-radius:50%;background:#6a6a6a}
.b span{flex:none;width:37.46px;text-align:center;font-size:11px;line-height:11px;color:#000}`,`<div class="b"><b></b></div>`,(h,s)=>{const b=s.querySelector('.b');if(b.querySelector('span'))return;for(let f=-50;f<=280;f+=10){const e=document.createElement('span');e.textContent=f;b.appendChild(e);}});

/* ---------- 3D view ---------- */
const X=z=>150+z/2.8,Y=z=>350+z/3,X2=z=>550+z/2.8,Y2=z=>350+z/3;
const P=[[1303,135,2],[1303,152,2],[1260,150,2.5],[1250,172,3],[1225,150,3],[1218,155,3],[1195,180,3.5],[1220,190,4],[1240,222,4.5],[1210,218,4],[1160,230,5],[1182,230,5],[1195,245,4.5],[1215,240,4],[1216,270,5],[1185,305,5.5],[1170,270,5],[1140,272,6],[1125,285,6],[1150,320,7],[1130,290,7],[1155,368,8],[1095,352,10],[1080,375,7],[1120,412,8],[1070,415,12],[1000,470,8],[1030,480,12],[1085,500,7],[1080,565,11],[1000,525,14],[950,540,8],[1040,560,8],[945,590,12],[1020,615,14],[985,650,13],[945,630,10],[1000,690,8],
[1400,368,2.5],[1380,385,2],[1378,398,2],[1362,378,2.5],[1400,385,2],[1332,375,3],[1303,422,5],[1285,420,3.5],[1288,445,3.5],[1253,452,7],[1220,455,5.5],[1185,487,5.5],[1178,517,7.5],[1155,545,7.5],
[720,312,1],[700,335,2],[695,352,2.5],[718,370,3.5],[740,380,3],[745,400,4],[762,405,3.5],[735,435,5],[775,460,7],[770,440,4],[800,510,10],[830,540,5],
[515,415,2],[505,432,2],[565,418,4],[537,438,3.5],[575,450,3],[600,445,3.5],[580,458,3],[630,458,4.5],[650,468,4],[593,487,4.5],[640,515,6],[665,520,8],[705,520,11],[690,555,8],[760,590,10],[800,600,13],[840,610,10],[860,640,9],
[355,478,2.5],[395,488,5.5],[425,520,4],[448,510,5],[495,520,7],[515,530,5],[560,545,9.5],[605,570,10],[600,600,6],[655,610,9],[640,640,9],[700,610,11],[730,585,10],
[175,630,1.5],[180,648,2],[150,648,1.5],[213,638,1.5],[240,650,3],[285,630,3],[285,650,2.5],[315,655,3.5],[360,630,4.5],[380,618,3.5],[360,660,4.5],[390,650,5],[460,630,6.5],[470,655,3],[490,665,3],[515,645,4],[520,670,3],[545,660,3.5],[500,690,2],[460,710,3],[545,710,3.5],[470,690,3],[495,680,3.5],[525,700,3],[450,665,3.5],[535,680,3.5],[570,655,4.5],[600,645,5.5],[560,705,4],[585,700,5],[565,680,4],[590,665,5],[610,680,6],[630,660,6],[605,720,5],[620,720,7],[665,690,10],[720,690,12],[760,720,12],[790,725,9],[830,700,11],[860,680,8]];
const R=[[1300,72],[1327,90],[1257,127],[686,298],[481,393],[200,432],[114,638],[422,678],[396,702],[1458,330]];
function sceneSVG(){
  let s='';
  s+=`<polygon points="187,446 1108,472 1108,740 1102,757 159,730 159,520" fill="#bbb"/>`;
  s+=`<path d="M524 743 411 893" stroke="#111" stroke-dasharray="3 4" fill="none"/>`;
  let g='';
  for(let r=0;r<17;r++){
    const y0=522+r*9.73, xl=Math.max(341,555-r*13.4), xr=945-r*4.4;
    const col=r==8?'#a64a4a':'#454545';
    const off=(r%2)?17:0;
    for(let x=xl-((xl-off)%34.3);x<xr;x+=34.3){
      const a=Math.max(x,xl),b=Math.min(x+17,xr);
      if(b<=a)continue;
      if(r==8&&a<578)continue;
      const ya=y0+.028*(a-600),yb=y0+.028*(b-600);
      g+=`<path d="M${a.toFixed(1)} ${ya.toFixed(1)}L${b.toFixed(1)} ${yb.toFixed(1)}" stroke="${col}"/>`;
    }
  }
  s+=g;
  const L2=[[282,985,440,530],[402,915,415,870],[430,845,485,680],[500,640,515,598],[525,570,538,532],[570,993,685,668],[665,997,827,542],[800,890,922,545],[953,1005,1050,725],[972,680,1020,547],[950,745,956,727],[124,598,152,520]];
  L2.forEach(l=>s+=`<path d="M${X2(l[0])} ${Y2(l[1])}L${X2(l[2])} ${Y2(l[3])}" stroke="#454545"/>`);
  const L1=[[918,968,953,868],[1015,972,1060,840],[1100,740,1160,565],[1075,810,1078,800]];
  L1.forEach(l=>s+=`<path d="M${X(l[0])} ${Y(l[1])}L${X(l[2])} ${Y(l[3])}" stroke="#454545"/>`);
  s+=`<path d="M${X2(183)} ${Y2(980)}L${X2(252)} ${Y2(785)}" stroke="#3f8a3f"/>`;
  s+=`<path d="M${X2(667)} ${Y2(190)}L${X2(667)} ${Y2(680)}" stroke="#8a8a8a"/>`;
  s+=`<path d="M${X2(630)} ${Y2(190)}L${X2(305)} ${Y2(650)}" stroke="#111" stroke-dasharray="3 3" fill="none"/>`;
  const sh=(pts,c='#000')=>`<polygon points="${pts.map(p=>X(p[0]).toFixed(1)+','+Y(p[1]).toFixed(1)).join(' ')}" fill="${c}"/>`;
  s+=sh([[340,790],[400,780],[395,775],[500,770],[495,762],[590,752],[680,750],[750,768],[830,768],[860,720],[880,680],[920,680],[970,715],[1060,735],[1150,745],[1000,752],[930,750],[850,770],[750,785],[640,795],[600,808],[520,830],[455,818],[500,805],[430,800],[350,796]],'#000');
  s+=`<path d="M${X(600)} ${Y(786)}H${X(680)}M${X(440)} ${Y(795)}H${X(520)}" stroke="#666"/>`;
  s+=sh([[95,716],[130,714],[135,719],[180,720],[200,712],[205,718],[225,710],[245,714],[260,712],[295,708],[330,716],[365,722],[300,728],[275,720],[180,722]]);
  s+=sh([[250,660],[285,650],[350,672],[300,675],[260,665]]);
  s+=sh([[420,725],[510,718],[600,738],[500,735]]);
  s+=`<path d="M${X(60)} ${Y(633)}h4" stroke="#000"/>`;
  const mass='#454851';
  let part=sh([[600,720],[620,640],[690,520],[780,520],[860,590],[885,720],[800,770],[680,745]],mass);
  part+=sh([[925,650],[945,535],[1030,440],[1095,370],[1125,430],[1110,570],[1060,650],[1000,705]],mass);
  let seed=12345;const rnd=()=>{seed=(seed*1664525+1013904223)>>>0;return seed/4294967296;};
  const ps=[];
  const body=(cx,cy,r,i)=>{
    ps.push(`<circle cx="${cx.toFixed(1)}" cy="${cy.toFixed(1)}" r="${r.toFixed(1)}" fill="#484b55" stroke="#b26e42"/>`);
    if(r>=8)ps.push(`<path d="M${(cx-r*.85).toFixed(1)} ${(cy+r*.1).toFixed(1)}A${(r*.9).toFixed(1)} ${(r*.9).toFixed(1)} 0 0 0 ${(cx+r*.3).toFixed(1)} ${(cy+r*.82).toFixed(1)}" fill="none" stroke="#3a3d45" stroke-width="3"/>`);
    if(r>=6&&i%3==0){const a=r*.72;ps.push(`<path d="M${(cx+a).toFixed(1)} ${(cy-a*.4).toFixed(1)}A${r.toFixed(1)} ${r.toFixed(1)} 0 0 1 ${(cx-a*.2).toFixed(1)} ${(cy+a).toFixed(1)}" fill="none" stroke="#d4c8c0"/>`);}
  };
  P.forEach((p,i)=>{
    const cx=X(p[0]),cy=Y(p[1]),r=p[2]*(p[2]>=3?1.22:1.1);
    if(p[2]>=4){
      const n=p[2]>=7?2:1;
      for(let k=0;k<n;k++){const a=rnd()*6.283,d=r*(.7+rnd()*.6);body(cx+Math.cos(a)*d,cy+Math.sin(a)*d,r*.85,i+k+1);}
    }
    body(cx,cy,r,i);
  });
  part+=ps.join('');
  s+=`<g shape-rendering="crispEdges">${part}</g>`;
  let red='';
  R.forEach(p=>{const cx=X(p[0]),cy=Y(p[1]);
    red+=`<circle cx="${cx.toFixed(1)}" cy="${cy.toFixed(1)}" r="8.2" fill="#8c0a0a" stroke="#ffbd94"/><path d="M${(cx-6).toFixed(1)} ${(cy+3).toFixed(1)}A7 7 0 0 0 ${(cx+5).toFixed(1)} ${(cy+5).toFixed(1)}" fill="none" stroke="#5e0404" stroke-width="2"/>`;});
  s+=red;
  s+=`<path d="M${X(890)} ${Y(735)}V${Y(545)}" stroke="#1818e0" stroke-width="1.5"/><polygon points="${X(890)},${Y(498)} ${X(905)},${Y(552)} ${X(877)},${Y(552)}" fill="#1818e0"/>`;
  s+=`<path d="M${X(890)} ${Y(740)}H${X(1080)}" stroke="#c81818" stroke-width="1.5"/><polygon points="${X(1070)},${Y(730)} ${X(1118)},${Y(745)} ${X(1070)},${Y(760)}" fill="#e81818"/>`;
  s+=`<path d="M${X(892)} ${Y(735)}L${X(908)} ${Y(690)}" stroke="#1c8c1c"/><circle cx="${X(909)}" cy="${Y(685)}" r="4" fill="#107c10"/>`;
  s+=`<circle cx="${X(890)}" cy="${Y(737)}" r="15" fill="none" stroke="#fff"/><circle cx="${X(890)}" cy="${Y(739)}" r="2.5" fill="#d8a050" stroke="#333" stroke-width=".6"/>`;
  const bl=(pts,c)=>`<polygon points="${pts.map(p=>X2(p[0]).toFixed(1)+','+Y2(p[1]).toFixed(1)).join(' ')}" fill="${c}"/>`;
  s+=`<ellipse cx="${X2(185)}" cy="${Y2(752)}" rx="14" ry="7" fill="#000"/>`;
  s+=bl([[178,720],[192,695],[210,675],[235,660],[265,653],[295,658],[320,670],[340,695],[355,725],[357,765],[330,775],[300,780],[200,778],[180,745]],'#0a12b4');
  s+=bl([[178,720],[210,690],[240,705],[228,750],[180,745]],'#0a0f8e');
  s+=bl([[200,778],[180,745],[228,750],[250,778]],'#07096a');
  s+=bl([[210,675],[265,653],[275,685],[240,705],[210,690]],'#0c14c0');
  s+=bl([[240,705],[275,685],[285,745],[240,750]],'#1a2ad8');
  s+=bl([[275,685],[325,718],[285,745]],'#9aa0f8');
  s+=bl([[275,685],[320,670],[340,695],[325,718]],'#0e18c8');
  s+=bl([[325,718],[355,725],[357,765],[318,775],[285,745]],'#1420c8');
  s+=bl([[240,750],[285,745],[318,775],[250,778]],'#0c18a8');
  s+=`<circle cx="${X2(264)}" cy="${Y2(752)}" r="10" fill="none" stroke="#fff" stroke-dasharray="3 3"/><circle cx="${X2(264)}" cy="${Y2(752)}" r="10" fill="none" stroke="#c81818" stroke-dasharray="3 3" stroke-dashoffset="3"/>`;
  s+=`<path d="M${X2(264)} ${Y2(695)}V${Y2(815)}M${X2(205)} ${Y2(752)}H${X2(320)}" stroke="#000"/>`;
  s+=`<ellipse cx="${X2(1063)}" cy="${Y2(770)}" rx="33" ry="8.5" fill="#000"/>`;
  s+=`<circle cx="${X2(1130)}" cy="${Y2(672)}" r="26" fill="#cfd0d4"/><circle cx="${X2(1118)}" cy="${Y2(682)}" r="26" fill="#3d4048"/><ellipse cx="${X2(1130)}" cy="${Y2(680)}" rx="23.5" ry="23" fill="#4a4d56"/>`;
  const lx=X2(667),ly=Y2(147);
  s+=`<circle cx="${lx}" cy="${ly}" r="3.4" fill="#000"/><circle cx="${lx}" cy="${ly}" r="11" fill="none" stroke="#000" stroke-dasharray="3 3"/>`;
  for(let a=0;a<8;a++){const t=a*Math.PI/4,c=Math.cos(t),n=Math.sin(t);s+=`<path d="M${(lx+c*13).toFixed(1)} ${(ly+n*13).toFixed(1)}L${(lx+c*21).toFixed(1)} ${(ly+n*21).toFixed(1)}" stroke="#000" stroke-dasharray="3 2"/>`;}
  s+=`<path d="M185 868V845" stroke="#1818c0" stroke-width="1.2"/><path d="M185 868H210" stroke="#c01818" stroke-width="1.2"/><path d="M185 868l3-5" stroke="#20a020" stroke-width="1.2"/>`;
  return s;
}
def('b-view',`:host{display:block;flex:1;min-width:0;position:relative;overflow:hidden;background:#393939}
svg{position:absolute;left:0;top:0;display:block;shape-rendering:auto}
.ax{position:absolute;font-size:11px;line-height:12px}
::slotted(.t){position:absolute;color:#eee;font-size:11px;line-height:14px;white-space:nowrap}
::slotted([slot=ortho]){left:20.5px;top:10px}::slotted([slot=name]){left:70.5px;top:847px}`,
`<svg id="s" width="949" height="868" viewBox="159 27 949 868"></svg><slot name="ortho"></slot><slot name="name"></slot>
<span class="ax" style="left:30px;top:807px;color:#1818b8">z</span><span class="ax" style="left:33px;top:824px;color:#20a020">y</span><span class="ax" style="left:55px;top:831px;color:#b81818">x</span>`,
(h,s)=>{s.getElementById('s').innerHTML=sceneSVG();});
</script>
</body></html>
